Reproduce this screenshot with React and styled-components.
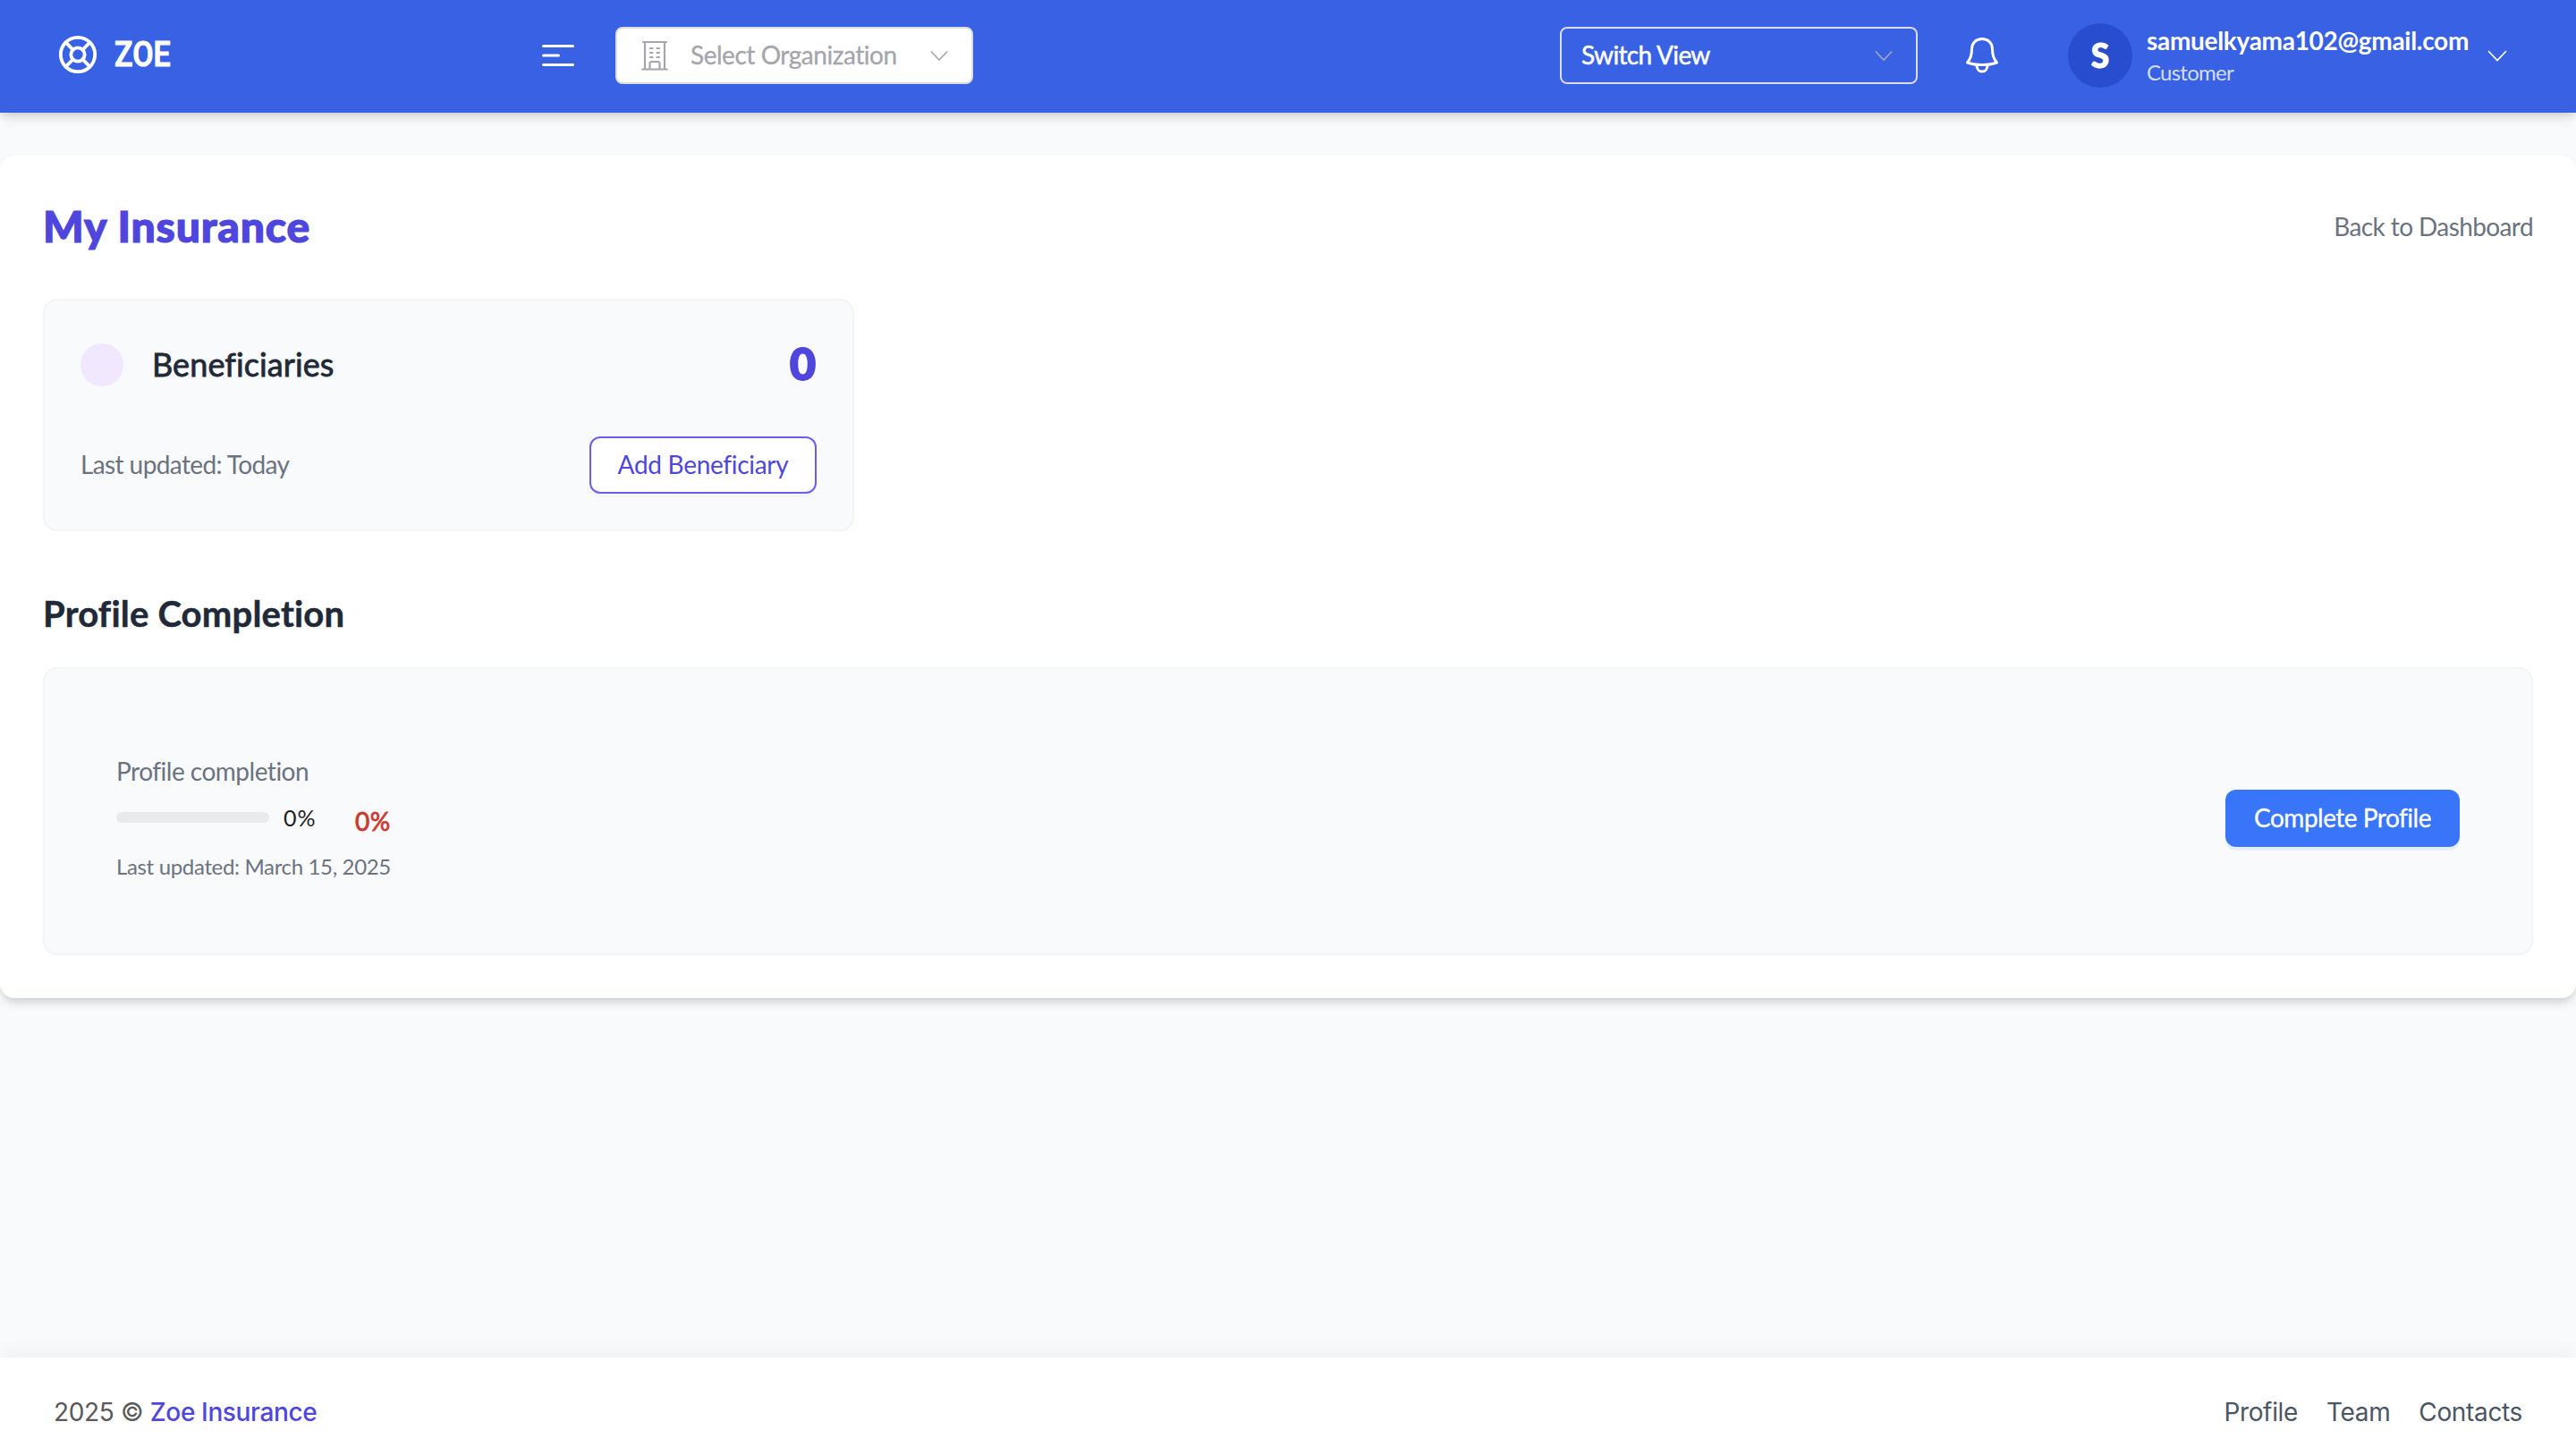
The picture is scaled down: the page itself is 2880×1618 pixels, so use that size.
import { LifeBuoy } from "lucide-react";
import styled, { createGlobalStyle } from "styled-components";

export default function App() {
    return (
        <>
            <GlobalStyle />
            <Page>
                <Header />
                <Insurance />
                <Footer />
            </Page>
        </>
    );
}

function Header() {
    return (
        <HeaderBar>
            <Brand>
                <LifeBuoy size={46} strokeWidth={2} />
                <BrandName>ZOE</BrandName>
            </Brand>
            <MenuIcon />
            <OrganizationSelect>
                <BuildingIcon />
                <Text $size={28} $spacing={-0.46} $stroke={0.3}>Select Organization</Text>
                <Chevron color="#a5a5ad" width={20} />
            </OrganizationSelect>
            <ViewSelect>
                <Text $size={28} $spacing={-0.65} $stroke={0.5}>Switch View</Text>
                <Chevron color="#a5a9b8" width={20} />
            </ViewSelect>
            <BellIcon />
            <Avatar>S</Avatar>
            <User>
                <Text $size={28} $weight={700} $spacing={-0.3}>samuelkyama102@gmail.com</Text>
                <Role $size={24} $spacing={-0.75}>Customer</Role>
            </User>
            <Chevron color="#fff" width={22} />
        </HeaderBar>
    );
}

function Insurance() {
    return (
        <Panel>
            <TitleRow>
                <Title $size={48} $weight={900} $spacing={0.85} $stroke={1.2}>My Insurance</Title>
                <Muted $size={28} $spacing={-0.6}>Back to Dashboard</Muted>
            </TitleRow>

            <BeneficiaryCard>
                <CardRow>
                    <Dot />
                    <CardName $size={36} $spacing={0.1} $stroke={0.8}>Beneficiaries</CardName>
                    <Count>0</Count>
                </CardRow>
                <CardRow>
                    <Muted $size={28} $spacing={-0.6}>Last updated: Today</Muted>
                    <OutlineButton>
                        <Text $size={28} $spacing={-0.3}>Add Beneficiary</Text>
                    </OutlineButton>
                </CardRow>
            </BeneficiaryCard>

            <Subtitle $size={40} $weight={700} $spacing={0.2} $stroke={0.5}>Profile Completion</Subtitle>

            <ProfileCard>
                <div>
                    <Muted $size={28} $spacing={-0.5}>Profile completion</Muted>
                    <ProgressRow>
                        <Track />
                        <Percent $size={25} $spacing={1}>0%</Percent>
                        <RedPercent $size={28} $spacing={0.6} $stroke={0.8}>0%</RedPercent>
                    </ProgressRow>
                    <Updated $size={24} $spacing={-0.34}>Last updated: March 15, 2025</Updated>
                </div>
                <PrimaryButton>
                    <Text $size={28} $spacing={-0.5} $stroke={0.3}>Complete Profile</Text>
                </PrimaryButton>
            </ProfileCard>
        </Panel>
    );
}

function Footer() {
    return (
        <FooterBar>
            <p>2025 © <a>Zoe Insurance</a></p>
            <nav>
                <span>Profile</span>
                <span>Team</span>
                <span>Contacts</span>
            </nav>
        </FooterBar>
    );
}

function MenuIcon() {
    return (
        <svg width="36" height="24" viewBox="0 0 36 24" stroke="#fff" strokeWidth="3" strokeLinecap="round">
            <path d="M1.5 1.5h33M1.5 12h17M1.5 22.5h33" />
        </svg>
    );
}

function BuildingIcon() {
    return (
        <svg width="30" height="34" viewBox="0 0 30 34" fill="none" stroke="#a5a5ad" strokeWidth="2.2" strokeLinecap="round">
            <path d="M2 2h26M4 2v30M26 2v30M1.2 32.500h27.600M9.500 32v-6q0-2 2-2h7q2 0 2 2v6" />
            <path d="M10 9h2.500M17.500 9H20M10 14h2.500M17.500 14H20M10 19h2.500M17.500 19H20" />
        </svg>
    );
}

function BellIcon() {
    return (
        <svg width="36" height="40" viewBox="0 0 36 40" fill="none" stroke="#fff" strokeWidth="3" strokeLinejoin="round">
            <path d="M18 1.500C11 1.500 6.500 6.500 6.500 13c0 7-1 10.500-5 15 9 3.300 24 3.300 33 0-4-4.500-5-8-5-15 0-6.500-4.500-11.500-11.500-11.500z" />
            <path d="M12 31c0 4 2.500 7 6 7s6-3 6-7" />
        </svg>
    );
}

function Chevron({ color, width }) {
    return (
        <svg width={width} height="13" viewBox="0 0 22 13" fill="none" stroke={color} strokeWidth="1.7">
            <path d="M1 1l10 10.500 10-10.500" />
        </svg>
    );
}

const GlobalStyle = createGlobalStyle`
    * {
        box-sizing: border-box;
    }
    body {
        margin: 0;
        background-color: #f9fafc;
        font-family: Lato, "Open Sans", sans-serif;
        font-variant-ligatures: none;
    }
    p {
        margin: 0;
    }
    svg {
        display: block;
        flex-shrink: 0;
    }
`

const Page = styled.div`
    display: flex;
    flex-direction: column;
    height: 1618px;
    overflow: hidden;
`

const Text = styled.span`
    display: block;
    font-size: ${props => props.$size}px;
    font-weight: ${props => props.$weight || 400};
    letter-spacing: ${props => props.$spacing || 0}px;
    -webkit-text-stroke: ${props => props.$stroke || 0}px currentColor;
    line-height: 44px;
    white-space: nowrap;
`

const Muted = styled(Text)`
    padding-bottom: 3px;
    color: #6b7280;
`

const HeaderBar = styled.header`
    display: flex;
    align-items: center;
    height: 126px;
    padding: 0 77px 2px 64px;
    background-color: #3861e4;
    color: #fff;
    box-shadow: 0 8px 12px -2px rgba(0, 0, 0, 0.1), 0 4px 8px -2px rgba(0, 0, 0, 0.1);
`

const Brand = styled.div`
    display: flex;
    align-items: center;
    gap: 18px;
    width: 542px;
    padding-bottom: 2px;
`

const BrandName = styled.span`
    font-family: Roboto, sans-serif;
    font-size: 38px;
    font-weight: 500;
    letter-spacing: 0.2px;
    -webkit-text-stroke: 1.2px #fff;
    transform: scaleX(0.89);
    transform-origin: left;
`

const Select = styled.div`
    display: flex;
    align-items: center;
    width: 400px;
    height: 64px;
    border: 2px solid #dcdce2;
    border-radius: 8px;
    ${Text} {
        margin-right: auto;
        padding-bottom: 2px;
    }
`

const OrganizationSelect = styled(Select)`
    gap: 25px;
    margin-left: 46px;
    padding: 0 26px 0 27px;
    background-color: #fff;
    color: #a5a5ad;
`

const ViewSelect = styled(Select)`
    margin: 0 54px 0 auto;
    padding: 0 26px 0 22px;
`

const Avatar = styled.div`
    display: flex;
    align-items: center;
    justify-content: center;
    width: 72px;
    height: 72px;
    margin: 0 16px 0 78px;
    padding-bottom: 2px;
    border-radius: 50%;
    background-color: #294dcf;
    font-size: 37px;
    font-weight: 900;
    -webkit-text-stroke: 1px #fff;
`

const User = styled.div`
    width: 381px;
    padding-bottom: 7px;
`

const Role = styled(Text)`
    line-height: 28px;
    color: #d3ddfa;
`

const Panel = styled.main`
    height: 942px;
    margin-top: 48px;
    padding: 48px;
    border-radius: 16px;
    background-color: #fff;
    box-shadow: 0 8px 12px -2px rgba(0, 0, 0, 0.1), 0 4px 8px -2px rgba(0, 0, 0, 0.1);
`

const TitleRow = styled.div`
    display: flex;
    align-items: center;
    justify-content: space-between;
    height: 64px;
    margin-bottom: 48px;
`

const Title = styled(Text)`
    padding-bottom: 2px;
    color: #4f46dd;
`

const BeneficiaryCard = styled.section`
    display: flex;
    flex-direction: column;
    justify-content: space-between;
    width: 907px;
    height: 260px;
    padding: 40px;
    border: 2px solid #f3f4f6;
    border-radius: 16px;
    background-color: #f9fafc;
`

const CardRow = styled.div`
    display: flex;
    align-items: center;
    justify-content: space-between;
    height: 64px;
`

const Dot = styled.div`
    width: 48px;
    height: 48px;
    border-radius: 50%;
    background-color: #f1e7fe;
`

const CardName = styled(Text)`
    flex: 1;
    margin-left: 32px;
    padding-bottom: 2px;
    color: #1f2937;
`

const Count = styled.span`
    padding: 0 1px 4px 0;
    font-size: 50px;
    font-weight: 900;
    line-height: 64px;
    color: #4f46dd;
    -webkit-text-stroke: 2px #4f46dd;
`

const Button = styled.button`
    display: flex;
    align-items: center;
    justify-content: center;
    height: 64px;
    padding: 0 0 2px;
    border-radius: 12px;
    font-family: inherit;
`

const OutlineButton = styled(Button)`
    width: 254px;
    border: 2px solid #6961ec;
    background-color: #fff;
    color: #4f46dd;
    box-shadow: 0 4px 0 rgba(0, 0, 0, 0.02);
`

const PrimaryButton = styled(Button)`
    width: 262px;
    border: none;
    background-color: #3975f8;
    color: #fff;
    box-shadow: 0 4px 0 #e7eefd;
`

const Subtitle = styled(Text)`
    margin: 64px 0 32px;
    line-height: 56px;
    color: #1f2937;
`

const ProfileCard = styled.section`
    display: flex;
    align-items: center;
    justify-content: space-between;
    height: 322px;
    padding: 16px 80px 0;
    border: 2px solid #f3f4f6;
    border-radius: 16px;
    background-color: #f9fafc;
`

const ProgressRow = styled.div`
    display: flex;
    align-items: center;
    height: 54px;
`

const Track = styled.div`
    width: 171px;
    height: 12px;
    border-radius: 6px;
    background-color: #e9eaec;
`

const Percent = styled(Text)`
    width: 80px;
    margin-left: 16px;
    color: #1f1f1f;
`

const RedPercent = styled(Text)`
    padding-top: 8px;
    color: #cb3a31;
`

const Updated = styled(Muted)`
    margin-top: 6px;
    padding-bottom: 0;
`

const FooterBar = styled.footer`
    display: flex;
    align-items: center;
    justify-content: space-between;
    height: 100px;
    margin-top: auto;
    padding: 22px 60px 0;
    background-color: #fff;
    box-shadow: 0 -4px 24px rgba(0, 0, 0, 0.05);
    font-family: Inter, sans-serif;
    font-size: 28px;
    letter-spacing: -0.35px;
    color: #595959;
    a {
        font-weight: 500;
        color: #4f46dd;
    }
    nav {
        display: flex;
        gap: 32px;
        color: #4b5563;
    }
`
